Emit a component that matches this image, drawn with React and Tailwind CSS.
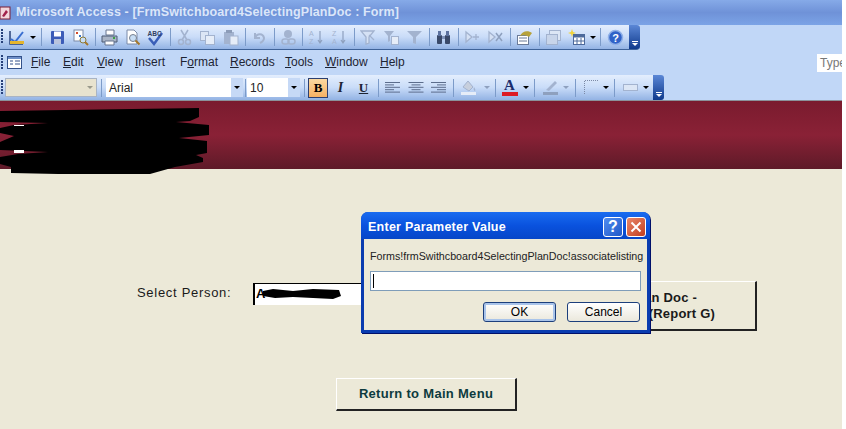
import React from 'react';

const ui = { fontFamily: '"Liberation Sans", Arial, sans-serif' };

const Sep = ({ w = 'w-[6px]' }) => (
  <div className={`${w} h-[18px] flex justify-center shrink-0`}>
    <div className="w-px h-full bg-[#7c9bc9]" />
  </div>
);

const Grip = () => (
  <div className="w-[3px] h-[16px] ml-px shrink-0 flex flex-col gap-px">
    {[0, 1, 2, 3, 4].map((i) => <div key={i} className="w-[2px] h-[2px] bg-[#27417a]" />)}
  </div>
);

const Arrow = ({ color = 'border-t-black' }) => (
  <div className={`w-0 h-0 border-l-[3px] border-r-[3px] border-t-[3px] border-l-transparent border-r-transparent ${color}`} />
);

const ArrowCell = ({ w = 'w-[9px]', color }) => (
  <div className={`${w} h-full flex items-center justify-center shrink-0`}><Arrow color={color} /></div>
);

const Cell = ({ children, w = 'w-[23px]' }) => (
  <div className={`${w} h-full flex items-center justify-center shrink-0`}>
    <svg width="17" height="17" viewBox="0 0 17 17" fill="none">{children}</svg>
  </div>
);

const Chevron = ({ w = 'w-[11px]' }) => (
  <div className={`${w} self-stretch rounded-r-[3px] bg-gradient-to-b from-[#5b87d6] to-[#0f3a8c] flex flex-col items-center justify-end pb-[3px] gap-px shrink-0`}>
    <div className="w-[6px] h-px bg-white" />
    <Arrow color="border-t-white" />
  </div>
);

const Combo = ({ w, children, disabled }) => (
  <div className={`${w} h-[19px] flex items-center shrink-0 ${disabled ? 'bg-[#e8e3cf] border border-[#a9b4c4]' : 'bg-white'}`}>
    <span className="flex-1 pl-[3px] text-[12px] text-[#222] leading-none">{children}</span>
    <div className={`w-[12px] h-full flex items-center justify-center ${disabled ? '' : 'bg-[#c6d9f6]'}`}>
      <Arrow color={disabled ? 'border-t-[#9a9a8c]' : 'border-t-black'} />
    </div>
  </div>
);

const Menu = ({ pre = '', u, post, w }) => (
  <span className={`${w} shrink-0 text-[12px] leading-[14px] mb-[2px] text-[#1d2433]`}>
    {pre}<span className="underline">{u}</span>{post}
  </span>
);

const Lines = ({ kind }) => {
  const rows = [
    [1, 15], [1, 9], [1, 15], [1, 9], [1, 15],
  ];
  return (
    <Cell>
      {rows.map(([x, len], i) => {
        const x0 = kind === 'c' ? (16 - len) / 2 + 1 : kind === 'r' ? 16 - len : x;
        return <rect key={i} x={x0} y={3 + i * 2.4} width={len} height="1" fill="#5c6d8c" />;
      })}
    </Cell>
  );
};

const dim = '#a3b3cf';

function TopToolbar() {
  return (
    <div className="w-[640px] h-[25px] flex items-center rounded-r-[4px] bg-gradient-to-b from-[#e4eefd] via-[#c9dcf8] to-[#93b3e4] border-b border-[#3f6399]">
      <Grip />
      <div className="w-[1px]" />
      <Cell>
        <path d="M2 2v13h13" stroke="#27417a" strokeWidth="1.5" />
        <path d="M3 10l4 3 8-10" stroke="#3a6fd0" strokeWidth="2" />
        <rect x="2" y="12" width="14" height="3" fill="#e4b52e" />
      </Cell>
      <ArrowCell />
      <Sep w="w-[9px]" />
      <Cell>
        <rect x="2" y="2" width="13" height="13" rx="1" fill="#3c5cb8" />
        <rect x="5" y="2.5" width="7" height="5" fill="#fff" />
        <rect x="5" y="10" width="7" height="5" fill="#b9c4de" />
      </Cell>
      <Cell>
        <rect x="2" y="1" width="9" height="11" fill="#fff" stroke="#7a8aa8" />
        <rect x="4" y="3" width="2" height="2" fill="#d24a2c" />
        <rect x="7" y="6" width="2" height="2" fill="#3c78c8" />
        <circle cx="11" cy="11" r="3" fill="#c8def5" stroke="#8a7a3a" />
        <path d="M13 13l3 3" stroke="#a5782a" strokeWidth="2" />
      </Cell>
      <Sep />
      <Cell>
        <path d="M5 1h8v5H5z" fill="#fff" stroke="#66758f" />
        <path d="M1 7h15v6H1z" fill="#a9b4c6" stroke="#4d5a74" />
        <path d="M4 12h9v4H4z" fill="#fff" stroke="#66758f" />
        <rect x="12" y="8" width="2" height="2" fill="#3aa142" />
      </Cell>
      <Cell>
        <path d="M3 1h7l3 3v11H3z" fill="#fff" stroke="#7a8aa8" />
        <circle cx="9" cy="9" r="3.5" fill="#c8def5" stroke="#77808f" />
        <path d="M11.500 11.500l4 4" stroke="#a5782a" strokeWidth="2" />
      </Cell>
      <Cell>
        <path d="M2 9l5 6 8-11" stroke="#3a5fb8" strokeWidth="2.500" />
        <text x="0.500" y="6.500" fontSize="6.500" fontWeight="700" fill="#30405f" fontFamily="Liberation Sans">ABC</text>
      </Cell>
      <Sep />
      <Cell>
        <path d="M5 1l6 10M12 1L6 11" stroke={dim} strokeWidth="1.500" />
        <circle cx="5" cy="13" r="2.500" stroke={dim} strokeWidth="1.500" />
        <circle cx="12" cy="13" r="2.500" stroke={dim} strokeWidth="1.500" />
      </Cell>
      <Cell>
        <rect x="1.500" y="2.500" width="8" height="9" fill="#dce6f5" stroke={dim} />
        <rect x="6.500" y="6.500" width="9" height="9" fill="#e6edf8" stroke={dim} />
      </Cell>
      <Cell>
        <rect x="2" y="3" width="10" height="12" fill={dim} />
        <rect x="4" y="1" width="6" height="3" fill="#8c9cb8" />
        <rect x="8" y="7" width="8" height="9" fill="#e6edf8" stroke={dim} />
      </Cell>
      <Sep />
      <Cell>
        <path d="M4 4v5h5M4 9c2-5 8-5 9 0 0 2-2 4-4 5" stroke={dim} strokeWidth="2" />
      </Cell>
      <Sep />
      <Cell>
        <circle cx="8" cy="5" r="4" fill={dim} />
        <rect x="2" y="10" width="7" height="5" rx="2.500" stroke={dim} strokeWidth="1.500" />
        <rect x="8" y="10" width="7" height="5" rx="2.500" stroke={dim} strokeWidth="1.500" />
      </Cell>
      <Sep w="w-[5px]" />
      <Cell>
        <text x="1" y="7" fontSize="7" fill={dim} fontFamily="Liberation Sans">A</text>
        <text x="1" y="15" fontSize="7" fill={dim} fontFamily="Liberation Sans">Z</text>
        <path d="M12 2v12M10 11l2 3 2-3" stroke="#8ea0be" strokeWidth="1.200" />
      </Cell>
      <Cell>
        <text x="1" y="7" fontSize="7" fill={dim} fontFamily="Liberation Sans">Z</text>
        <text x="1" y="15" fontSize="7" fill={dim} fontFamily="Liberation Sans">A</text>
        <path d="M12 2v12M10 11l2 3 2-3" stroke="#8ea0be" strokeWidth="1.200" />
      </Cell>
      <Sep />
      <Cell>
        <path d="M1 2h13L9 8v6l-3 1V8z" stroke={dim} strokeWidth="1.300" fill="#d5e1f4" />
        <path d="M9 6l5 5" stroke={dim} strokeWidth="1.300" />
      </Cell>
      <Cell>
        <path d="M1 2h10L7 7v5l-2 1V7z" fill={dim} />
        <rect x="8.500" y="7.500" width="7" height="8" fill="#e6edf8" stroke={dim} />
      </Cell>
      <Cell>
        <path d="M1 2h15l-6 6v7l-3-1V8z" fill={dim} />
      </Cell>
      <Sep />
      <Cell>
        <rect x="2" y="6" width="5" height="9" rx="1" fill="#3a4a6a" />
        <rect x="10" y="6" width="5" height="9" rx="1" fill="#3a4a6a" />
        <rect x="3" y="2" width="3" height="5" fill="#5c72a0" />
        <rect x="11" y="2" width="3" height="5" fill="#5c72a0" />
        <rect x="7" y="7" width="3" height="3" fill="#7f93bb" />
      </Cell>
      <Sep />
      <Cell>
        <path d="M2 3l6 5-6 5zM9 8h6M12 5v6" stroke={dim} strokeWidth="1.300" fill="#d5e1f4" />
      </Cell>
      <Cell>
        <path d="M2 3l6 5-6 5z" stroke={dim} strokeWidth="1.300" fill="#d5e1f4" />
        <path d="M9 4l6 8M15 4l-6 8" stroke="#8ea0be" strokeWidth="1.500" />
      </Cell>
      <Sep />
      <Cell>
        <rect x="1.500" y="6.500" width="11" height="9" fill="#fff" stroke="#6a7a98" />
        <path d="M3 9h8M3 12h8" stroke="#6a7a98" />
        <path d="M4 7c2-5 8-6 12-3l-3 4c-3-2-6-2-9-1z" fill="#b7a23a" />
      </Cell>
      <Sep />
      <Cell>
        <rect x="4.500" y="1.500" width="11" height="10" fill="#dce6f5" stroke={dim} />
        <rect x="1.500" y="5.500" width="11" height="10" fill="#c8d5ea" stroke={dim} />
      </Cell>
      <Cell>
        <rect x="5.500" y="5.500" width="11" height="10" fill="#fff" stroke="#4d6a9c" />
        <rect x="5.500" y="5.500" width="11" height="3" fill="#4d6a9c" />
        <path d="M9 9v6M13 9v6M6 12h10" stroke="#4d6a9c" />
        <path d="M4 0l1 3 3 1-3 1-1 3-1-3-3-1 3-1z" fill="#f2d43a" />
      </Cell>
      <ArrowCell />
      <Sep w="w-[7px]" />
      <Cell w="w-[22px]">
        <circle cx="8.500" cy="8.500" r="7" fill="#2f62c8" stroke="#8fb0e8" strokeWidth="1.500" />
        <text x="8.500" y="12.500" textAnchor="middle" fontSize="11" fontWeight="700" fill="#fff" fontFamily="Liberation Sans">?</text>
      </Cell>
      <div className="flex-1" />
      <Chevron />
    </div>
  );
}

function MenuRow() {
  return (
    <div className="h-[25px] flex items-center" style={ui}>
      <Grip />
      <div className="w-[3px]" />
      <svg width="15" height="13" viewBox="0 0 15 13" className="shrink-0">
        <rect x="0.500" y="0.500" width="14" height="12" fill="#fff" stroke="#33518a" />
        <rect x="1" y="1" width="13" height="2" fill="#6f8fc8" />
        <path d="M3 5h3M3 8h3M8 5h5M8 8h5" stroke="#33518a" />
      </svg>
      <div className="w-[9px]" />
      <Menu u="F" post="ile" w="w-[32px]" />
      <Menu u="E" post="dit" w="w-[34px]" />
      <Menu u="V" post="iew" w="w-[38px]" />
      <Menu u="I" post="nsert" w="w-[45px]" />
      <Menu pre="F" u="o" post="rmat" w="w-[50px]" />
      <Menu u="R" post="ecords" w="w-[55px]" />
      <Menu u="T" post="ools" w="w-[40px]" />
      <Menu u="W" post="indow" w="w-[55px]" />
      <Menu u="H" post="elp" w="w-[30px]" />
      <div className="ml-auto w-[25px] h-[18px] bg-white overflow-hidden pl-[3px] text-[12px] leading-[18px] text-[#777] whitespace-nowrap">Type</div>
    </div>
  );
}

function FormatToolbar() {
  return (
    <div className="w-[664px] h-[25px] flex items-center rounded-r-[4px] bg-gradient-to-b from-[#e4eefd] via-[#c9dcf8] to-[#93b3e4]" style={ui}>
      <Grip />
      <div className="w-[1px]" />
      <Combo w="w-[92px]" disabled />
      <Sep w="w-[9px]" />
      <Combo w="w-[137px]">Arial</Combo>
      <Sep w="w-[4px]" />
      <Combo w="w-[53px]">10</Combo>
      <Sep w="w-[8px]" />
      <div className="w-[20px] h-[20px] bg-gradient-to-b from-[#fbd9a0] to-[#f6b163] border border-[#2c3f70] flex items-center justify-center text-[13px] font-bold text-black shrink-0" style={{ fontFamily: '"Liberation Serif", serif' }}>B</div>
      <div className="w-[23px] ml-[1px] text-center text-[14px] italic font-bold text-[#1d2433]" style={{ fontFamily: '"Liberation Serif", serif' }}>I</div>
      <div className="w-[23px] text-center text-[13px] font-bold underline text-[#1d2433]" style={{ fontFamily: '"Liberation Serif", serif' }}>U</div>
      <Sep />
      <Lines kind="l" />
      <Lines kind="c" />
      <Lines kind="r" />
      <Sep w="w-[7px]" />
      <Cell>
        <path d="M3 8l5-6 5 6-4 4z" fill="#c7cfdd" stroke={dim} />
        <path d="M14 8c1 2 2 3 1 4-1 0-2-2-1-4z" fill={dim} />
        <rect x="1" y="13" width="15" height="3" fill="#e6edf8" />
      </Cell>
      <ArrowCell w="w-[13px]" color="border-t-[#8ea0be]" />
      <Sep w="w-[5px]" />
      <div className="w-[23px] h-full flex flex-col items-center justify-center shrink-0">
        <span className="text-[15px] font-bold leading-[13px] text-[#1b2e6e]" style={{ fontFamily: '"Liberation Serif", serif' }}>A</span>
        <div className="w-[16px] h-[4px] bg-[#dd1a22]" />
      </div>
      <ArrowCell w="w-[9px]" />
      <Sep w="w-[9px]" />
      <Cell>
        <path d="M4 11L13 2l2 2-8 8z" fill={dim} />
        <rect x="1" y="13" width="15" height="3" fill="#8ea0be" />
      </Cell>
      <ArrowCell w="w-[8px]" color="border-t-[#8ea0be]" />
      <Sep w="w-[10px]" />
      <Cell>
        <path d="M1.500 15V1.500H15.500" stroke="#7c8aa6" strokeDasharray="1 1" />
      </Cell>
      <ArrowCell w="w-[6px]" />
      <Sep w="w-[10px]" />
      <Cell>
        <rect x="1.500" y="5.500" width="14" height="6" stroke={dim} fill="#dce6f5" />
      </Cell>
      <ArrowCell w="w-[7px]" />
      <div className="flex-1" />
      <Chevron />
    </div>
  );
}

function Redaction() {
  return (
    <svg className="absolute left-0 top-[7px]" width="210" height="66" viewBox="0 0 210 66">
      <path fill="#000" d="M0 3L66 2 199 0V9L190 13 176 14 209 17V27L179 30 207 33V45L196 47 203 50V54L175 59 150 66H58L11 65V59L0 56V49L18 46 48 44 0 42V34L14 28 0 25V20L14 17 48 15 0 14z" />
      <rect x="14" y="17" width="10" height="1" fill="#fff" />
      <rect x="14" y="42" width="10" height="3" fill="#fff" />
    </svg>
  );
}

const WinBtn = ({ className, children }) => (
  <div className={`w-[20px] h-[20px] rounded-[3px] border border-white flex items-center justify-center shrink-0 ${className}`}>{children}</div>
);

const DlgBtn = ({ children, active }) => (
  <div className={`w-[73px] h-[20px] rounded-[3px] flex items-center justify-center text-[12px] text-black bg-gradient-to-b from-white to-[#ebe8dc] border border-[#1c3f7c] ${active ? 'shadow-[inset_0_0_0_2px_#a9c4ea]' : ''}`}>{children}</div>
);

function ParameterDialog() {
  return (
    <div className="absolute left-[361px] top-[111px] w-[289px] h-[121px] flex flex-col rounded-t-[7px] bg-[#0a3cb0] p-[3px] pt-0 shadow-[1px_1px_0_#00106a]" style={ui}>
      <div className="h-[27px] -mx-[3px] px-[4px] pt-[2px] rounded-t-[7px] bg-gradient-to-b from-[#1a6cf0] via-[#0a52de] to-[#0646c8] flex items-center gap-[3px]">
        <span className="ml-[3px] mt-[2px] flex-1 text-[12.500px] font-bold tracking-[0.25px] text-white">Enter Parameter Value</span>
        <WinBtn className="bg-gradient-to-br from-[#4f8cf0] to-[#2358c8] text-white text-[16px] font-bold leading-none">?</WinBtn>
        <WinBtn className="bg-gradient-to-br from-[#e8876a] to-[#c23c1c]">
          <svg width="12" height="12" viewBox="0 0 12 12"><path d="M1.500 1.500l9 9M10.500 1.500l-9 9" stroke="#fff" strokeWidth="2" /></svg>
        </WinBtn>
      </div>
      <div className="flex-1 bg-[#ece9d8] px-[6px] pt-[9px]">
        <div className="text-[10.700px] leading-[16px] text-[#222] whitespace-nowrap">Forms!frmSwithcboard4SelectingPlanDoc!associatelisting</div>
        <div className="mt-[7px] h-[20px] w-[271px] bg-white border border-[#7f9db9] flex items-center pl-[2px]">
          <div className="w-px h-[14px] bg-black" />
        </div>
        <div className="mt-[11px] flex justify-end gap-[11px] pr-[1px] w-[271px]">
          <DlgBtn active>OK</DlgBtn>
          <DlgBtn>Cancel</DlgBtn>
        </div>
      </div>
    </div>
  );
}

export default function App() {
  return (
    <div className="w-[846px] h-[429px] overflow-hidden bg-white flex" style={ui}>
      <div className="w-[842px] flex flex-col shrink-0">
        <div className="h-[25px] flex items-center bg-gradient-to-b from-[#86aae8] via-[#6f92d8] to-[#7ba3e6]">
          <svg width="11" height="14" viewBox="0 0 11 14" className="shrink-0">
            <rect x="0" y="1" width="10" height="12" fill="#f3d6dc" stroke="#7a1c34" />
            <path d="M2 10l4-6 2 2-4 5z" fill="#a1204a" />
          </svg>
          <span className="ml-[5px] text-[12.500px] font-bold tracking-[0.12px] text-[#dbe6f9] whitespace-nowrap">Microsoft Access - [FrmSwitchboard4SelectingPlanDoc : Form]</span>
        </div>
        <div className="h-[76px] bg-[#c1d7f7] flex flex-col" style={ui}>
          <TopToolbar />
          <MenuRow />
          <FormatToolbar />
          <div className="h-px bg-[#8b929a]" />
        </div>
        <div className="flex-1 relative bg-[#ece9d8]">
          <div className="h-[68px] bg-gradient-to-b from-[#7a1b2e] via-[#8a2136] to-[#5e1a28]" />
          <div className="pt-[112px] pl-[137px] flex items-start">
            <span className="w-[116px] mt-[4px] text-[13px] leading-[16px] font-medium tracking-[0.7px] text-[#1a1a1a] shrink-0">Select Person:</span>
            <div className="relative mt-[2px] w-[140px] h-[22px] bg-white border-t border-l-2 border-black shrink-0 text-[13px] font-bold leading-[20px] pl-px">
              A
              <svg className="absolute left-[8px] top-[4px]" width="78" height="12" viewBox="0 0 78 12">
                <path fill="#000" d="M0 3L10 1 30 3 50 1 76 2 78 8 70 11 50 10 30 9 12 10 0 8z" />
              </svg>
            </div>
            <div className="ml-auto mr-[85px] w-[220px] h-[50px] border-t border-l border-white border-r-2 border-b-2 border-r-[#222] border-b-[#222] shrink-0 text-[13px] font-bold tracking-[0.2px] leading-[16px] text-[#1a1a1a] flex flex-col justify-center items-end pr-[40px] pt-[1px]">
              <span className="pr-[18px]">Plan Doc -</span>
              <span>(Report G)</span>
            </div>
          </div>
          <div className="mt-[47px] ml-[336px] w-[181px] h-[33px] flex items-center justify-center border-t border-l border-white border-r-2 border-b-2 border-r-[#222] border-b-[#222] text-[13px] font-bold tracking-[0.3px] text-[#0d3b3e]">
            Return to Main Menu
          </div>
          <Redaction />
          <ParameterDialog />
        </div>
      </div>
    </div>
  );
}
